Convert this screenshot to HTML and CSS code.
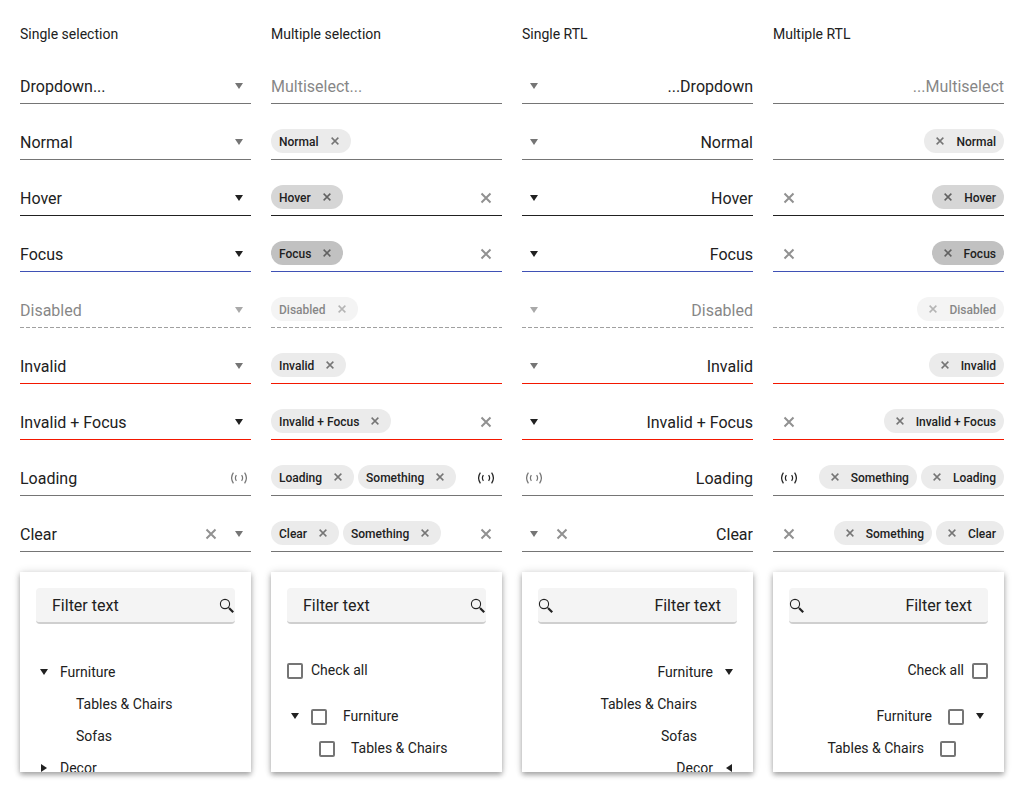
FILE: index.html
```html
<!DOCTYPE html>
<html lang="en">
<head>
<meta charset="utf-8">
<title>Dropdown tree states</title>
<link rel="stylesheet" href="styles.css">
</head>
<body>
<svg class="sprite" aria-hidden="true">
  <symbol id="down" viewBox="0 0 16 16"><path d="M4 5h8l-4 6z" fill="currentColor"/></symbol>
  <symbol id="right" viewBox="0 0 16 16"><path d="M5 4v8l6-4z" fill="currentColor"/></symbol>
  <symbol id="left" viewBox="0 0 16 16"><path d="M11 4v8l-6-4z" fill="currentColor"/></symbol>
  <symbol id="x" viewBox="0 0 16 16"><path d="M3.500 3.500l9 9M12.500 3.500l-9 9" fill="none" stroke="currentColor" stroke-width="2"/></symbol>
  <symbol id="load" viewBox="0 0 16 16"><path d="M2.400 2.700Q-1.200 8 2.400 13.300M13.600 2.700Q17.200 8 13.600 13.300M5.400 5.100Q3.400 8 5.400 10.900M10.600 5.100Q12.600 8 10.600 10.900" fill="none" stroke="currentColor" stroke-width="1.200"/></symbol>
  <symbol id="search" viewBox="0 0 16 16"><circle cx="6" cy="6" r="4.600" fill="none" stroke="currentColor" stroke-width="1.100"/><path d="M9.300 9.300l1.400 1.400" stroke="currentColor" stroke-width="1.200"/><path d="M10.200 10.200l4 4" stroke="currentColor" stroke-width="2.200"/></symbol>
</svg>
<main class="board">
  <section class="column">
    <h2 class="title">Single selection</h2>
    <div class="field"><select class="value" aria-label="Dropdown"><option>Dropdown...</option></select><svg class="icon"><use href="#down"/></svg></div>
    <div class="field"><select class="value" aria-label="Normal"><option>Normal</option></select><svg class="icon"><use href="#down"/></svg></div>
    <div class="field hover"><select class="value" aria-label="Hover"><option>Hover</option></select><svg class="icon"><use href="#down"/></svg></div>
    <div class="field focus"><select class="value" aria-label="Focus"><option>Focus</option></select><svg class="icon"><use href="#down"/></svg></div>
    <div class="field disabled"><select class="value" aria-label="Disabled" disabled><option>Disabled</option></select><svg class="icon"><use href="#down"/></svg></div>
    <div class="field invalid"><select class="value" aria-label="Invalid"><option>Invalid</option></select><svg class="icon"><use href="#down"/></svg></div>
    <div class="field invalid active"><select class="value" aria-label="Invalid + Focus"><option>Invalid + Focus</option></select><svg class="icon"><use href="#down"/></svg></div>
    <div class="field"><select class="value" aria-label="Loading"><option>Loading</option></select><svg class="icon"><use href="#load"/></svg></div>
    <div class="field"><select class="value" aria-label="Clear"><option>Clear</option></select><button class="clear" aria-label="Clear value"><svg><use href="#x"/></svg></button><svg class="icon"><use href="#down"/></svg></div>
    <div class="panel">
      <div class="filter"><input class="filter-input" type="text" aria-label="Filter" value="Filter text"><svg><use href="#search"/></svg></div>
      <ul class="tree">
        <li class="node"><svg><use href="#down"/></svg><span>Furniture</span></li>
        <li class="node leaf"><span>Tables &amp; Chairs</span></li>
        <li class="node leaf"><span>Sofas</span></li>
        <li class="node"><svg><use href="#right"/></svg><span>Decor</span></li>
      </ul>
    </div>
  </section>

  <section class="column">
    <h2 class="title">Multiple selection</h2>
    <div class="field"><input class="value" type="text" aria-label="Multiselect" placeholder="Multiselect..."></div>
    <div class="field"><div class="chips"><span class="chip">Normal<button class="remove" aria-label="Remove"><svg><use href="#x"/></svg></button></span></div></div>
    <div class="field hover"><div class="chips"><span class="chip">Hover<button class="remove" aria-label="Remove"><svg><use href="#x"/></svg></button></span></div><button class="clear wide" aria-label="Clear all"><svg><use href="#x"/></svg></button></div>
    <div class="field focus"><div class="chips"><span class="chip">Focus<button class="remove" aria-label="Remove"><svg><use href="#x"/></svg></button></span></div><button class="clear wide" aria-label="Clear all"><svg><use href="#x"/></svg></button></div>
    <div class="field disabled"><div class="chips"><span class="chip">Disabled<button class="remove" aria-label="Remove" disabled><svg><use href="#x"/></svg></button></span></div></div>
    <div class="field invalid"><div class="chips"><span class="chip">Invalid<button class="remove" aria-label="Remove"><svg><use href="#x"/></svg></button></span></div></div>
    <div class="field invalid active"><div class="chips"><span class="chip">Invalid + Focus<button class="remove" aria-label="Remove"><svg><use href="#x"/></svg></button></span></div><button class="clear wide" aria-label="Clear all"><svg><use href="#x"/></svg></button></div>
    <div class="field"><div class="chips"><span class="chip">Loading<button class="remove" aria-label="Remove"><svg><use href="#x"/></svg></button></span><span class="chip">Something<button class="remove" aria-label="Remove"><svg><use href="#x"/></svg></button></span></div><svg class="icon wide"><use href="#load"/></svg></div>
    <div class="field"><div class="chips"><span class="chip">Clear<button class="remove" aria-label="Remove"><svg><use href="#x"/></svg></button></span><span class="chip">Something<button class="remove" aria-label="Remove"><svg><use href="#x"/></svg></button></span></div><button class="clear wide" aria-label="Clear all"><svg><use href="#x"/></svg></button></div>
    <div class="panel">
      <div class="filter"><input class="filter-input" type="text" aria-label="Filter" value="Filter text"><svg><use href="#search"/></svg></div>
      <label class="check-all"><input class="check" type="checkbox"><span>Check all</span></label>
      <ul class="tree">
        <li class="node"><svg><use href="#down"/></svg><label class="option"><input class="check" type="checkbox"><span>Furniture</span></label></li>
        <li class="node child"><label class="option"><input class="check" type="checkbox"><span>Tables &amp; Chairs</span></label></li>
      </ul>
    </div>
  </section>

  <section class="column">
    <h2 class="title">Single RTL</h2>
    <div class="field" dir="rtl"><select class="value" aria-label="Dropdown"><option>Dropdown...</option></select><svg class="icon"><use href="#down"/></svg></div>
    <div class="field" dir="rtl"><select class="value" aria-label="Normal"><option>Normal</option></select><svg class="icon"><use href="#down"/></svg></div>
    <div class="field hover" dir="rtl"><select class="value" aria-label="Hover"><option>Hover</option></select><svg class="icon"><use href="#down"/></svg></div>
    <div class="field focus" dir="rtl"><select class="value" aria-label="Focus"><option>Focus</option></select><svg class="icon"><use href="#down"/></svg></div>
    <div class="field disabled" dir="rtl"><select class="value" aria-label="Disabled" disabled><option>Disabled</option></select><svg class="icon"><use href="#down"/></svg></div>
    <div class="field invalid" dir="rtl"><select class="value" aria-label="Invalid"><option>Invalid</option></select><svg class="icon"><use href="#down"/></svg></div>
    <div class="field invalid active" dir="rtl"><select class="value" aria-label="Invalid + Focus"><option>Invalid + Focus</option></select><svg class="icon"><use href="#down"/></svg></div>
    <div class="field" dir="rtl"><select class="value" aria-label="Loading"><option>Loading</option></select><svg class="icon"><use href="#load"/></svg></div>
    <div class="field" dir="rtl"><select class="value" aria-label="Clear"><option>Clear</option></select><button class="clear" aria-label="Clear value"><svg><use href="#x"/></svg></button><svg class="icon"><use href="#down"/></svg></div>
    <div class="panel" dir="rtl">
      <div class="filter"><input class="filter-input" type="text" aria-label="Filter" value="Filter text"><svg><use href="#search"/></svg></div>
      <ul class="tree">
        <li class="node"><svg><use href="#down"/></svg><span>Furniture</span></li>
        <li class="node leaf"><span>Tables &amp; Chairs</span></li>
        <li class="node leaf"><span>Sofas</span></li>
        <li class="node"><svg><use href="#left"/></svg><span>Decor</span></li>
      </ul>
    </div>
  </section>

  <section class="column">
    <h2 class="title">Multiple RTL</h2>
    <div class="field" dir="rtl"><input class="value" type="text" aria-label="Multiselect" placeholder="Multiselect..."></div>
    <div class="field" dir="rtl"><div class="chips"><span class="chip">Normal<button class="remove" aria-label="Remove"><svg><use href="#x"/></svg></button></span></div></div>
    <div class="field hover" dir="rtl"><div class="chips"><span class="chip">Hover<button class="remove" aria-label="Remove"><svg><use href="#x"/></svg></button></span></div><button class="clear wide" aria-label="Clear all"><svg><use href="#x"/></svg></button></div>
    <div class="field focus" dir="rtl"><div class="chips"><span class="chip">Focus<button class="remove" aria-label="Remove"><svg><use href="#x"/></svg></button></span></div><button class="clear wide" aria-label="Clear all"><svg><use href="#x"/></svg></button></div>
    <div class="field disabled" dir="rtl"><div class="chips"><span class="chip">Disabled<button class="remove" aria-label="Remove" disabled><svg><use href="#x"/></svg></button></span></div></div>
    <div class="field invalid" dir="rtl"><div class="chips"><span class="chip">Invalid<button class="remove" aria-label="Remove"><svg><use href="#x"/></svg></button></span></div></div>
    <div class="field invalid active" dir="rtl"><div class="chips"><span class="chip">Invalid + Focus<button class="remove" aria-label="Remove"><svg><use href="#x"/></svg></button></span></div><button class="clear wide" aria-label="Clear all"><svg><use href="#x"/></svg></button></div>
    <div class="field" dir="rtl"><div class="chips"><span class="chip">Loading<button class="remove" aria-label="Remove"><svg><use href="#x"/></svg></button></span><span class="chip">Something<button class="remove" aria-label="Remove"><svg><use href="#x"/></svg></button></span></div><svg class="icon wide"><use href="#load"/></svg></div>
    <div class="field" dir="rtl"><div class="chips"><span class="chip">Clear<button class="remove" aria-label="Remove"><svg><use href="#x"/></svg></button></span><span class="chip">Something<button class="remove" aria-label="Remove"><svg><use href="#x"/></svg></button></span></div><button class="clear wide" aria-label="Clear all"><svg><use href="#x"/></svg></button></div>
    <div class="panel" dir="rtl">
      <div class="filter"><input class="filter-input" type="text" aria-label="Filter" value="Filter text"><svg><use href="#search"/></svg></div>
      <label class="check-all"><input class="check" type="checkbox"><span>Check all</span></label>
      <ul class="tree">
        <li class="node"><svg><use href="#down"/></svg><label class="option"><input class="check" type="checkbox"><span>Furniture</span></label></li>
        <li class="node child"><label class="option"><input class="check" type="checkbox"><span>Tables &amp; Chairs</span></label></li>
      </ul>
    </div>
  </section>
</main>
</body>
</html>
```
FILE: styles.css
```css
*, *::before, *::after { box-sizing: border-box; }

body {
  margin: 0;
  background: #fff;
  color: #212121;
  font: 14px/20px Roboto, "Liberation Sans", sans-serif;
}

button, input, select {
  margin: 0;
  padding: 0;
  border: 0;
  background: none;
  color: inherit;
  font: inherit;
  appearance: none;
}

svg { flex: none; width: 16px; height: 16px; }
.sprite { position: absolute; width: 0; height: 0; }

.board {
  display: grid;
  grid-template-columns: repeat(4, minmax(0, 1fr));
  gap: 20px;
  padding: 20px;
}

.column { display: flex; flex-direction: column; gap: 24px; }
.title { margin: 0; font-size: 14px; font-weight: 400; line-height: 28px; }

/* Fields */
.field {
  display: flex;
  align-items: flex-start;
  gap: 4px;
  height: 32px;
  border-bottom: 1px solid #757575;
}

.value {
  flex: 1;
  min-width: 0;
  height: 29px;
  font-size: 16px;
  line-height: 28px;
  opacity: 1;
}
.value::placeholder { color: #212121; opacity: 0.54; }

.icon { width: 24px; height: 28px; padding: 6px 4px; color: #757575; }
.icon.wide { width: 32px; padding: 6px 8px; color: #212121; }

.clear { display: grid; place-items: center; width: 24px; height: 28px; color: #919191; }
.clear.wide { width: 32px; }

.hover { border-color: #212121; }
.focus { border-color: #3f51b5; }
.invalid { border-color: #f31700; }
.hover .icon, .focus .icon, .active .icon { color: #212121; }

.disabled {
  border-bottom-color: transparent;
  background: repeating-linear-gradient(90deg, #a0a0a0 0 4px, transparent 4px 6px) bottom / 100% 1px no-repeat border-box;
}
.disabled .value { opacity: 0.54; }
.disabled .icon { color: #a9a9a9; }

/* Chips */
.chips { display: flex; flex: 1; gap: 4px; padding-top: 1px; }
.chip {
  display: flex;
  align-items: flex-start;
  height: 24px;
  padding-inline-start: 8px;
  border-radius: 12px;
  background: #ebebeb;
  font-size: 12px;
  font-weight: 500;
  line-height: 26px;
  white-space: nowrap;
}
.remove { display: grid; place-items: center; width: 32px; height: 24px; color: #757575; }
.remove svg { width: 12px; height: 12px; }
.hover .chip { background: #d6d6d6; }
.focus .chip { background: #c1c1c1; }
.hover .remove, .focus .remove { color: #616161; }
.disabled .chip { opacity: 0.54; }

/* Popup */
.panel {
  height: 200px;
  margin-top: -4px;
  padding: 16px;
  overflow: hidden;
  background: #fff;
  box-shadow: 0 0 8px rgba(0, 0, 0, 0.14), 0 3px 5px rgba(0, 0, 0, 0.3);
}

.filter {
  display: flex;
  align-items: flex-end;
  height: 36px;
  margin-bottom: 32px;
  border-bottom: 2px solid #cfcfcf;
  border-radius: 4px;
  background: #f4f4f4;
}
.filter svg { margin-bottom: 8px; }
.filter-input { flex: 1; min-width: 0; height: 34px; padding: 0 16px; font-size: 16px; }

.tree { margin: 0; padding: 0; list-style: none; }
.node { display: flex; align-items: center; gap: 8px; height: 32px; }
.leaf { padding-inline-start: 40px; }
.child { padding-inline-start: 32px; }
.option { display: flex; align-items: center; gap: 16px; }

.check-all { display: flex; align-items: center; gap: 8px; height: 28px; margin-bottom: 16px; }
.check {
  width: 16px;
  height: 16px;
  margin-top: 2px;
  border: 2px solid #757575;
  border-radius: 2px;
}
```
